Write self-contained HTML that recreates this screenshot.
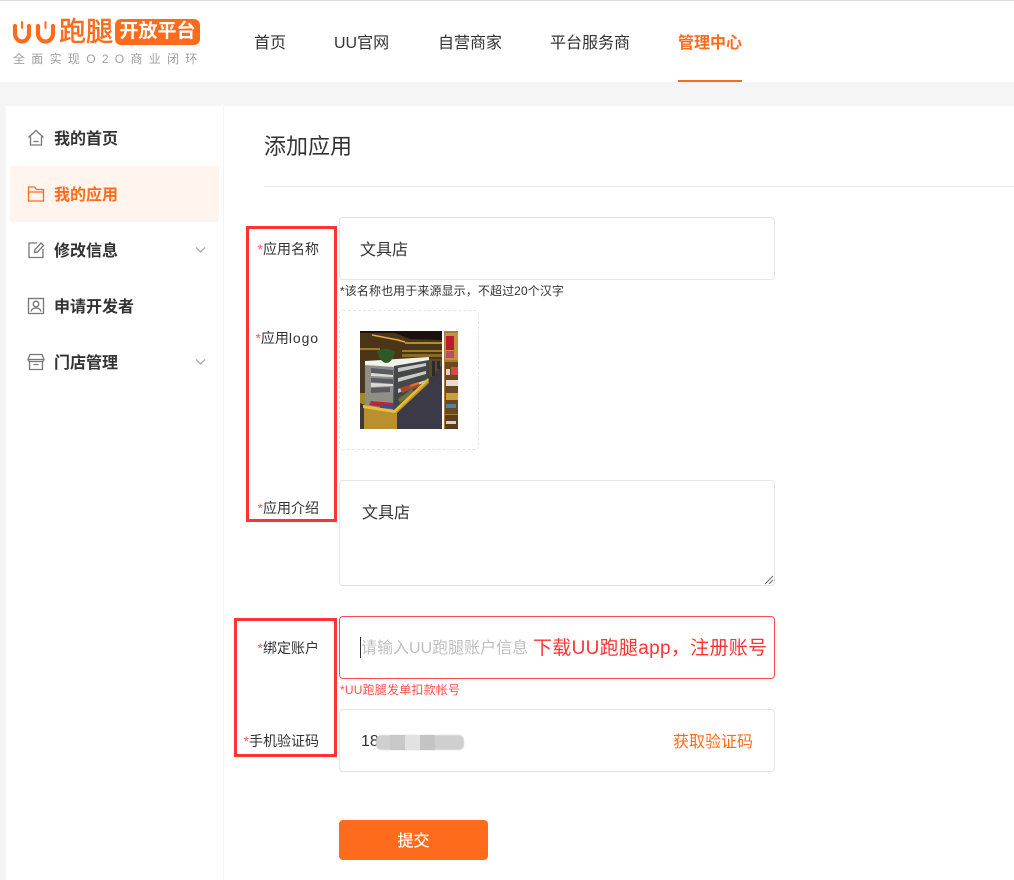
<!DOCTYPE html>
<html lang="zh">
<head>
<meta charset="utf-8">
<title>添加应用</title>
<style>
html,body{margin:0;padding:0}
body{width:1014px;height:880px;position:relative;overflow:hidden;background:#f5f5f5;font-family:"Liberation Sans","Noto Sans CJK SC",sans-serif;color:#333}
.a{position:absolute;white-space:nowrap}
.top{left:0;top:0;width:1014px;height:82px;background:#fff;border-top:1px solid #ddd;box-sizing:border-box}
.nav{top:32px;font-size:16px;line-height:20px;color:#333;transform:translateY(2px)}
.side{left:6px;top:106px;width:217px;height:774px;background:#fff}
.main{left:224px;top:106px;width:790px;height:774px;background:#fff}
.item{left:54px;font-size:16px;font-weight:bold;line-height:22px;color:#333}
.box{box-sizing:border-box;background:#fff;border:1px solid #e4e4e4;border-radius:4px}
.lab{font-size:14px;line-height:20px;color:#333;text-align:right;right:695px}
.lab i{font-style:normal;color:#ff5a4f}
.red{box-sizing:border-box;border:3px solid #f33;background:transparent}
svg{position:absolute;overflow:visible}
</style>
</head>
<body>
<div class="a top"></div>

<svg style="left:13px;top:21px" width="43" height="23" viewBox="0 0 43 23" fill="none" stroke="#ff6b1c" stroke-linecap="round">
  <path d="M2 5V12.500a7 8 0 0 0 14 0V5" stroke-width="4.200"/>
  <path d="M9 1V7" stroke-width="2"/>
  <path d="M25 5V12.500a7.500 8 0 0 0 15 0V5" stroke-width="4.200"/>
  <path d="M32.500 1V7" stroke-width="2"/>
</svg>
<div class="a" style="left:59px;top:16px;font-size:27px;line-height:32px;color:#ff6b1c;font-weight:400;-webkit-text-stroke:.6px #ff6b1c">跑腿</div>
<div class="a" style="left:115px;top:19px;width:85px;height:26px;background:#ff6b1c;border-radius:6px;color:#fff;font-size:19px;line-height:26px;font-weight:bold;text-align:center">开放平台</div>
<div class="a" style="left:13px;top:51px;font-size:12px;line-height:16px;color:#a0a0a0;letter-spacing:6.300px">全面实现O2O商业闭环</div>

<div class="a nav" style="left:254px">首页</div>
<div class="a nav" style="left:334px">UU官网</div>
<div class="a nav" style="left:438px">自营商家</div>
<div class="a nav" style="left:550px">平台服务商</div>
<div class="a nav" style="left:678px;color:#ff6b1c;font-weight:bold">管理中心</div>
<div class="a" style="left:678px;top:80px;width:64px;height:2px;background:#ff6b1c"></div>

<div class="a side"></div>
<div class="a main"></div>

<div class="a" style="left:10px;top:166px;width:209px;height:56px;background:#fff4ee;border-radius:2px"></div>

<svg style="left:27px;top:129px" width="18" height="18" viewBox="0 0 18 18" fill="none" stroke="#777" stroke-width="1.300">
  <path d="M1.500 8.500L9 1.500l7.500 7M3.500 7.500V16h11V7.500M6.500 12.500h5"/>
</svg>
<div class="a item" style="top:129px">我的首页</div>

<svg style="left:27px;top:185px" width="18" height="18" viewBox="0 0 18 18" fill="none" stroke="#ff6b1c" stroke-width="1.300">
  <path d="M1.500 16V2h6l2 2.500h7V16zM1.500 7h15"/>
</svg>
<div class="a item" style="top:185px;color:#ff6b1c">我的应用</div>

<svg style="left:27px;top:241px" width="18" height="18" viewBox="0 0 18 18" fill="none" stroke="#777" stroke-width="1.300">
  <path d="M10 2H2v14.500h14V8M7.500 11.500l.5-3L14 2l2.500 2.500-6 6.500z"/>
</svg>
<div class="a item" style="top:241px">修改信息</div>
<svg style="left:195px;top:246px" width="11" height="8" viewBox="0 0 11 8" fill="none" stroke="#aaa" stroke-width="1.300"><path d="M1 1.500l4.500 4.500L10 1.500"/></svg>

<svg style="left:27px;top:297px" width="18" height="18" viewBox="0 0 18 18" fill="none" stroke="#777" stroke-width="1.300">
  <rect x="1.500" y="1.500" width="15" height="15"/>
  <circle cx="9" cy="7" r="2.800"/>
  <path d="M4 14.500c.6-2.500 2.500-3.500 5-3.500s4.400 1 5 3.500"/>
</svg>
<div class="a item" style="top:297px">申请开发者</div>

<svg style="left:27px;top:353px" width="18" height="18" viewBox="0 0 18 18" fill="none" stroke="#777" stroke-width="1.300">
  <path d="M3 1.500h12l2 5c0 1.500-1.500 2-2.600 2H3.600C2.500 8.500 1 8 1 6.500zM1 6.500h16M2.500 8.500V16.500h13V8.500M6.500 11.500h5"/>
</svg>
<div class="a item" style="top:353px">门店管理</div>
<svg style="left:195px;top:358px" width="11" height="8" viewBox="0 0 11 8" fill="none" stroke="#aaa" stroke-width="1.300"><path d="M1 1.500l4.500 4.500L10 1.500"/></svg>

<div class="a" style="left:264px;top:132px;font-size:22px;line-height:30px;color:#333">添加应用</div>
<div class="a" style="left:264px;top:186px;width:750px;height:1px;background:#eee"></div>

<div class="a lab" style="top:239px"><i>*</i>应用名称</div>
<div class="a lab" style="top:328px"><i>*</i>应用<span style="letter-spacing:.9px">logo</span></div>
<div class="a lab" style="top:498px"><i>*</i>应用介绍</div>
<div class="a lab" style="top:638px"><i>*</i>绑定账户</div>
<div class="a lab" style="top:731px"><i>*</i>手机验证码</div>

<div class="a box" style="left:339px;top:217px;width:436px;height:63px"></div>
<div class="a" style="left:360px;top:240px;font-size:16px;line-height:22px;color:#333">文具店</div>
<div class="a" style="left:340px;top:283px;font-size:12px;line-height:17px;color:#333;letter-spacing:.1px">*该名称也用于来源显示，不超过20个汉字</div>

<div class="a" style="left:339px;top:310px;width:140px;height:140px;box-sizing:border-box;border:1px dashed #e4e4e4;border-radius:4px"></div>

<svg style="left:360px;top:331px" width="98" height="98" viewBox="0 0 98 98">
  <rect width="82" height="98" fill="#3c3a40"/>
  <rect width="82" height="10" fill="#1c1210"/>
  <path d="M0 0H82V32H0z" fill="#4a3516"/>
  <path d="M0 0H82V9L50 8 35 2H0z" fill="#1a1110"/>
  <path d="M12 4L38 9 45 11" stroke="#e0b040" stroke-width="1.500" fill="none"/>
  <path d="M45 12H82" stroke="#d8a838" stroke-width="1.500"/>
  <path d="M0 18H20M42 20H82" stroke="#c0902c" stroke-width="1.500"/>
  <path d="M42 23H82V26H42z" fill="#8a6a26"/>
  <path d="M0 32H5V74H0z" fill="#4a3820"/>
  <path d="M69 28H82V34L72 46H69z" fill="#5a4a30"/>
  <path d="M72 30h3v15h-3zM77 30h3v8h-3z" fill="#2c2a2c"/>
  <path d="M0 62H5V74L0 72z" fill="#a88628"/>
  <path d="M5 31H34V79L5 75z" fill="#8f8f88"/>
  <path d="M5 30L69 26V30L34 36 5 34z" fill="#eef3ec"/>
  <path d="M34 35L69 29 68 47 33 80z" fill="#454648"/>
  <path d="M11 37L33 39V44L11 42zM11 47L33 48V53L11 51zM11 57L30 56V61L11 62z" fill="#5a5a62"/>
  <path d="M11 42L33 44V46L11 45zM11 52L33 53V55L11 56z" fill="#dcdcd6"/>
  <path d="M38 37L66 32V35L38 41zM38 47L66 40V43L38 51zM38 58L66 49V51L38 62z" fill="#c8ccc8"/>
  <path d="M40 57L58 51 60 55 42 62z" fill="#a84830"/>
  <path d="M50 54l8-3 1 2-8 3z" fill="#e07020"/>
  <path d="M38 68L52 58 54 62 40 72z" fill="#6a7040"/>
  <path d="M11 70L34 72 33 78 9 74z" fill="#b52838"/>
  <path d="M20 75l13-1v4l-13-1z" fill="#3050a0"/>
  <path d="M3 74L34 79 68 48 69 52 37 82V98H4V78z" fill="#b89030"/>
  <path d="M3 74L34 79 68 47 69 49 35 82 3 77z" fill="#e8c030"/>
  <path d="M37 98V83L69 53 82 44V98z" fill="#3b3a46"/>
  <path d="M17 20c5-3 14-3 18 1-1 5-4 11-9 11-5-1-8-7-9-12z" fill="#2f5a24"/>
  <rect x="84" width="14" height="98" fill="#a87c38"/>
  <rect x="85" y="2" width="13" height="27" fill="#c69040"/>
  <rect x="86" y="5" width="8" height="14" fill="#c01830"/>
  <rect x="86" y="20" width="8" height="7" fill="#b85060"/>
  <rect x="85" y="31" width="13" height="52" fill="#6a4820"/>
  <rect x="86" y="38" width="4" height="6" fill="#e8d0c0"/>
  <rect x="91" y="36" width="7" height="8" fill="#d84840"/>
  <rect x="86" y="49" width="12" height="6" fill="#e8dcd8"/>
  <rect x="86" y="62" width="12" height="7" fill="#c8a040"/>
  <rect x="86" y="73" width="10" height="4" fill="#5080b0"/>
  <rect x="85" y="84" width="13" height="14" fill="#5a3e1c"/>
  <rect x="86" y="90" width="10" height="3" fill="#d8d0c0"/>
</svg>

<div class="a box" style="left:339px;top:480px;width:436px;height:106px"></div>
<div class="a" style="left:362px;top:503px;font-size:16px;line-height:22px;color:#333">文具店</div>
<svg style="left:763px;top:574px" width="11" height="11" viewBox="0 0 11 11" fill="none" stroke="#666" stroke-width="1"><path d="M2 10L10 2M6 10L10 6"/></svg>

<div class="a box" style="left:339px;top:616px;width:436px;height:63px;border-color:#ff4d4f"></div>
<div class="a" style="left:360px;top:637px;width:1px;height:21px;background:#333"></div>
<div class="a" style="left:361px;top:638px;font-size:16px;line-height:22px;color:#bfbfbf">请输入UU跑腿账户信息</div>
<div class="a" style="left:533px;top:636px;font-size:19px;line-height:26px;color:#f33;letter-spacing:.3px">下载UU跑腿app，注册账号</div>
<div class="a" style="left:340px;top:682px;font-size:12px;line-height:17px;color:#ff4d4f;letter-spacing:.2px">*UU跑腿发单扣款帐号</div>

<div class="a box" style="left:339px;top:709px;width:436px;height:63px"></div>
<div class="a" style="left:361px;top:731px;font-size:16px;line-height:22px;color:#333">18</div>
<div class="a" style="left:376px;top:735px;width:88px;height:15px;background:#cfcfcf;border-radius:5px;filter:blur(.6px)"></div>
<div class="a" style="left:390px;top:735px;width:15px;height:15px;background:#c8c8c8"></div>
<div class="a" style="left:405px;top:735px;width:15px;height:15px;background:#e2e2e2"></div>
<div class="a" style="left:420px;top:735px;width:15px;height:15px;background:#c4c4c4"></div>
<div class="a" style="left:673px;top:732px;font-size:16px;line-height:22px;color:#ff6b1c">获取验证码</div>

<div class="a" style="left:339px;top:820px;width:149px;height:40px;background:#ff6b1c;border-radius:4px;color:#fff;font-size:16px;line-height:43px;text-align:center;-webkit-text-stroke:.25px #fff">提交</div>

<div class="a red" style="left:246px;top:226px;width:91px;height:296px"></div>
<div class="a red" style="left:234px;top:618px;width:103px;height:139px"></div>
</body>
</html>
